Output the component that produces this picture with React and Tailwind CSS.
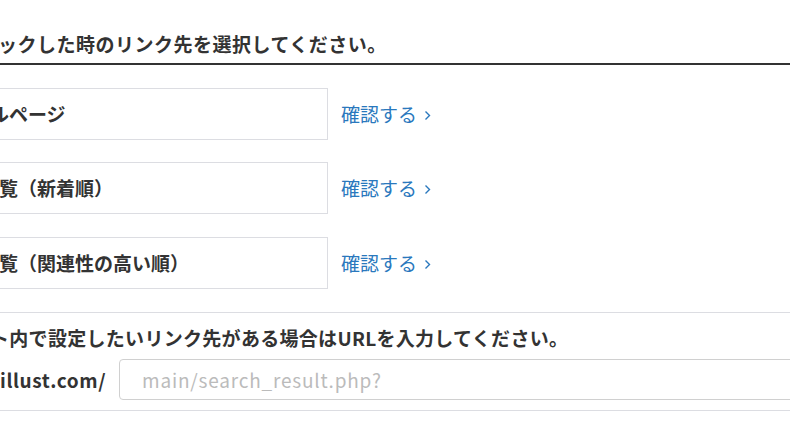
import React from "react";

const font = { fontFamily: '"Noto Sans CJK JP", "Noto Sans", sans-serif' };

function Chevron() {
  return (
    <svg width="7" height="11" viewBox="0 0 7 11" className="ml-[7px] mt-[2px]">
      <path d="M1.5 1.5 L5.5 5.5 L1.5 9.5" fill="none" stroke="#2a78bd" strokeWidth="1.4" />
    </svg>
  );
}

function Row({ label, indent, extra = "" }) {
  return (
    <div className={`flex items-center ${extra}`}>
      <div className={`-ml-[20px] w-[348px] h-[52px] shrink-0 border border-[#dcdde2] flex items-center font-bold text-[#333] whitespace-nowrap ${indent}`}>
        {label}
      </div>
      <a className="ml-[13px] flex items-center text-[#2a78bd] whitespace-nowrap">
        確認する
        <Chevron />
      </a>
    </div>
  );
}

export default function App() {
  return (
    <div className="w-[790px] h-[423px] overflow-hidden bg-white text-[19px] leading-[28px]" style={font}>
      <div className="pt-[30px] pb-[5px] border-b-2 border-[#333]">
        <h2 className="-ml-[2px] font-bold text-[#333] whitespace-nowrap tracking-[0.5px]">ックした時のリンク先を選択してください。</h2>
      </div>
      <div className="mt-[23px] flex flex-col">
        <Row label="ルページ" indent="pl-[9px]" />
        <Row label="覧（新着順）" indent="pl-[18px]" extra="mt-[22px]" />
        <Row label="覧（関連性の高い順）" indent="pl-[18px]" extra="mt-[23px]" />
      </div>
      <div className="mt-[23px] border-t border-[#dcdde2] pt-[11px] pb-[10px] border-b">
        <p className="-ml-[10px] font-bold text-[#333] whitespace-nowrap tracking-[0.3px]">ト内で設定したいリンク先がある場合はURLを入力してください。</p>
        <div className="mt-[7px] flex items-center">
          <span className="w-[119px] shrink-0 font-bold text-[#333] whitespace-nowrap tracking-[0.6px]">illust.com/</span>
          <input
            className="w-[720px] shrink-0 h-[41px] border border-[#d0d0d0] rounded-[4px] pl-[22px] text-[19px] tracking-[0.8px] text-[#333] placeholder:text-[#bbb] outline-none"
            style={font}
            placeholder="main/search_result.php?"
          />
        </div>
      </div>
    </div>
  );
}
